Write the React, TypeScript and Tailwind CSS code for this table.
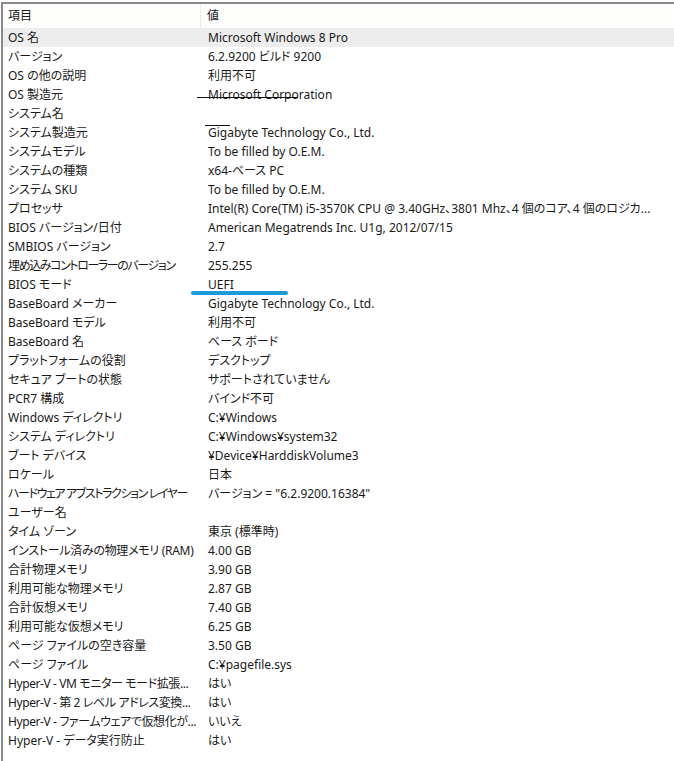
const rows: [string, string, string?][] = [
  ["OS 名", "Microsoft Windows 8 Pro"],
  ["バージョン", "6.2.9200 ビルド 9200"],
  ["OS の他の説明", "利用不可"],
  ["OS 製造元", "Microsoft Corporation"],
  ["システム名", ""],
  ["システム製造元", "Gigabyte Technology Co., Ltd."],
  ["システムモデル", "To be filled by O.E.M."],
  ["システムの種類", "x64-ベース PC"],
  ["システム SKU", "To be filled by O.E.M."],
  ["プロセッサ", "Intel(R) Core(TM) i5-3570K CPU @ 3.40GHz、3801 Mhz、4 個のコア、4 個のロジカ..."],
  ["BIOS バージョン/日付", "American Megatrends Inc. U1g, 2012/07/15"],
  ["SMBIOS バージョン", "2.7"],
  ["埋め込みコントローラーのバージョン", "255.255", "tracking-[-1.4px]"],
  ["BIOS モード", "UEFI"],
  ["BaseBoard メーカー", "Gigabyte Technology Co., Ltd."],
  ["BaseBoard モデル", "利用不可"],
  ["BaseBoard 名", "ベース ボード"],
  ["プラットフォームの役割", "デスクトップ"],
  ["セキュア ブートの状態", "サポートされていません"],
  ["PCR7 構成", "バインド不可"],
  ["Windows ディレクトリ", "C:¥Windows"],
  ["システム ディレクトリ", "C:¥Windows¥system32"],
  ["ブート デバイス", "¥Device¥HarddiskVolume3"],
  ["ロケール", "日本"],
  ["ハードウェア アブストラクション レイヤー", "バージョン = \"6.2.9200.16384\"", "tracking-[-1.4px]"],
  ["ユーザー名", ""],
  ["タイム ゾーン", "東京 (標準時)"],
  ["インストール済みの物理メモリ (RAM)", "4.00 GB", "tracking-[-0.3px]"],
  ["合計物理メモリ", "3.90 GB"],
  ["利用可能な物理メモリ", "2.87 GB"],
  ["合計仮想メモリ", "7.40 GB"],
  ["利用可能な仮想メモリ", "6.25 GB"],
  ["ページ ファイルの空き容量", "3.50 GB"],
  ["ページ ファイル", "C:¥pagefile.sys"],
  ["Hyper-V - VM モニター モード拡張...", "はい", "tracking-[-0.4px]"],
  ["Hyper-V - 第 2 レベル アドレス変換...", "はい", "tracking-[-0.4px]"],
  ["Hyper-V - ファームウェアで仮想化が...", "いいえ", "tracking-[-0.4px]"],
  ["Hyper-V - データ実行防止", "はい"],
];

export default function App() {
  return (
    <div
      className="relative w-[674px] h-[761px] bg-white overflow-hidden text-[12px] text-[#1a1a1a] [font-feature-settings:'palt']"
      style={{ fontFamily: '"Noto Sans", "Noto Sans CJK JP", sans-serif' }}
    >
      <div className="mt-[2px] ml-[1px] h-[759px] border-t-2 border-l-2 border-[#8a8a8a]">
        {/* header */}
        <div className="flex h-[24px] items-center bg-[#fdfdfb]">
          <div className="w-[198px] h-full flex items-center pl-[5px] border-r border-[#ececec]">
            項目
          </div>
          <div className="pl-[6px]">値</div>
        </div>
        {/* rows */}
        {rows.map(([k, v, tr], i) => (
          <div
            key={i}
            className={`flex h-[19px] items-center whitespace-nowrap ${
              i === 0 ? "bg-[#ededed]" : ""
            }`}
          >
            <div className={`w-[199px] pl-[5px] overflow-hidden ${tr ?? ""}`}>{k}</div>
            <div className="pl-[6px] overflow-hidden">{v}</div>
          </div>
        ))}
      </div>

      {/* hand-drawn annotations */}
      <div className="absolute left-[197px] top-[97px] w-[101px] h-[1px] bg-[#111]" />
      <div className="absolute left-[205px] top-[125px] w-[25px] h-[1px] bg-[#111]" />
      <div className="absolute left-[191px] top-[291px] w-[97px] h-[4px] rounded-full bg-[#1b9bd8]" />
    </div>
  );
}
